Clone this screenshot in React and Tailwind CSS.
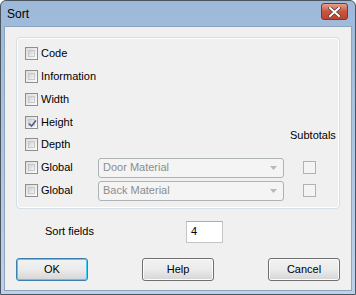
import React from "react";

function Check({ checked, className = "" }) {
  return (
    <div className={"w-[13px] h-[13px] border border-[#8e8f8f] bg-gradient-to-br from-[#dcdcdc] to-[#fbfbfb] p-[2px] flex " + className}>
      <div className="flex-1 border border-[#c8c8c8] bg-gradient-to-br from-[#cbcfd5] to-[#f6f6f6] relative">
        {checked && (
          <svg className="absolute left-[-1px] top-[-1px]" width="9" height="9" viewBox="0 0 9 9">
            <path d="M1 4.5 L3.5 7 L8 1.5" fill="none" stroke="#4b5e98" strokeWidth="1.6" />
          </svg>
        )}
      </div>
    </div>
  );
}

function DisabledCheck() {
  return <div className="ml-[19px] w-[13px] h-[13px] border border-[#b1b1b1] bg-[#f4f4f4]" />;
}

function Row({ label, checked, children }) {
  return (
    <div className="h-[23px] flex items-center">
      <Check checked={checked} />
      <span className="ml-[3px] w-[55px]">{label}</span>
      {children}
    </div>
  );
}

function Combo({ label }) {
  return (
    <div className="ml-[2px] w-[186px] h-[20px] border border-[#adb2b5] rounded-[3px] bg-[#f4f4f4] flex items-center px-[4px] text-[#8d8d8d]">
      <span className="flex-1">{label}</span>
      <svg width="7" height="4" viewBox="0 0 7 4" className="mr-[2px]">
        <path d="M0 0 H7 L3.5 4 Z" fill="#b8b8b8" />
      </svg>
    </div>
  );
}

function Button({ label, def }) {
  return (
    <div className={"w-[72px] h-[23px] rounded-[3px] border flex items-center justify-center bg-gradient-to-b from-[#f2f2f2] via-[#ebebeb] to-[#d5d5d5] " + (def ? "border-[#3c7fb1] shadow-[inset_0_0_0_1px_#48d0f8]" : "border-[#707070] shadow-[inset_0_0_0_1px_#fbfbfb]")}>
      {label}
    </div>
  );
}

export default function App() {
  return (
    <div className="w-[356px] h-[295px] border border-[#4b5661] rounded-t-[6px] bg-gradient-to-b from-[#9db9da] to-[#bcd2ea] flex flex-col text-[11px] text-black overflow-hidden" style={{ fontFamily: '"Liberation Sans", Arial, sans-serif' }}>
      <div className="h-[25px] flex items-center pl-[6px] pr-[7px] shrink-0">
        <span className="text-[12px] text-black flex-1">Sort</span>
        <div className="w-[27px] h-[17px] mt-[-4px] rounded-[3px] border border-[#6d3b3a] bg-gradient-to-b from-[#e3a08e] via-[#c9553e] to-[#c2432b] flex items-center justify-center">
          <svg width="13" height="10" viewBox="0 0 13 10">
            <path d="M2 1 L11 9 M11 1 L2 9" stroke="#4a3a3a" strokeWidth="3.4" strokeLinecap="square" />
            <path d="M2 1 L11 9 M11 1 L2 9" stroke="#ffffff" strokeWidth="2" strokeLinecap="square" />
          </svg>
        </div>
      </div>
      <div className="flex-1 mx-[3px] mb-[3px] border border-[#8ea3bc] bg-[#f0f0f0] flex flex-col px-[11px] pt-[10px]">
        <div className="h-[172px] border border-[#d5dfe5] rounded-[4px] shadow-[inset_0_0_0_1px_#fff] flex flex-col pt-[4px] pl-[8px]">
          <Row label="Code" />
          <Row label="Information" />
          <Row label="Width" />
          <div className="h-[22px] flex items-center">
            <Check checked />
            <span className="ml-[3px]">Height</span>
          </div>
          <div className="h-[23px] flex items-center relative">
            <Check />
            <span className="ml-[3px]">Depth</span>
            <span className="absolute left-[265px] top-[-6px]">Subtotals</span>
          </div>
          <Row label="Global">
            <Combo label="Door Material" />
            <DisabledCheck />
          </Row>
          <Row label="Global">
            <Combo label="Back Material" />
            <DisabledCheck />
          </Row>
        </div>
        <div className="flex items-center mt-[11px] h-[23px]">
          <span className="ml-[29px] w-[141px]">Sort fields</span>
          <div className="w-[37px] h-[22px] border border-[#c5c5c5] border-t-[#abadb3] bg-white flex items-center pl-[4px]">4</div>
        </div>
        <div className="flex justify-between mt-[15px]">
          <Button label="OK" def />
          <Button label="Help" />
          <Button label="Cancel" />
        </div>
      </div>
    </div>
  );
}
